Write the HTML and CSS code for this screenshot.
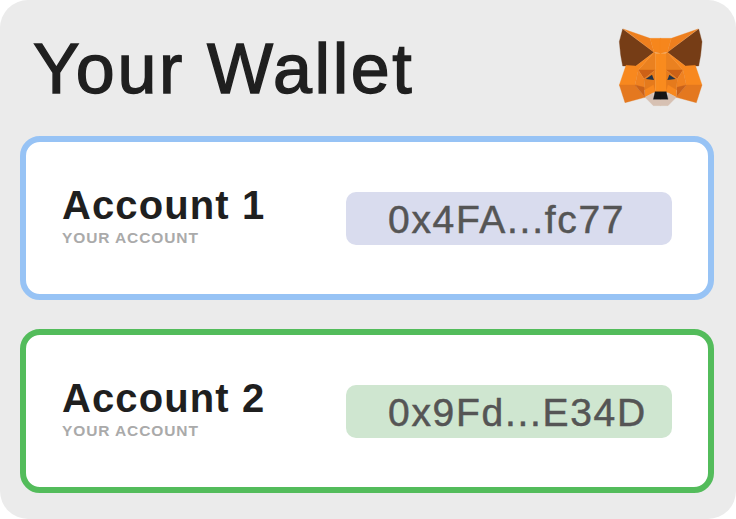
FILE: index.html
```html
<!DOCTYPE html>
<html lang="en">
<head>
    <meta charset="UTF-8">
    <meta name="viewport" content="width=device-width, initial-scale=1.0">
    <title>Your Wallet</title>
    <link rel="stylesheet" href="styles.css">
</head>
<body>
    <div class="wallet">
        <div class="wallet-header">
            <h1>Your Wallet</h1>
            <svg class="fox" viewBox="0 0 360 330" aria-hidden="true">
                <g id="half">
                    <polygon fill="#763d16" stroke="#763d16" points="68,57 162,127 108,168 68,168 62,135 58,95"/>
                    <polygon fill="#ee7f1e" stroke="#ee7f1e" points="70,57 150,85 162,127"/>
                    <polygon fill="#f6861c" stroke="#f6861c" points="150,85 183,85 183,130 162,127"/>
                    <polygon fill="#ea8120" stroke="#ea8120" points="162,127 166,130 166,180 115,180"/>
                    <polygon fill="#f8881e" stroke="#f8881e" points="78,166 108,168 162,127 115,180 105,225 58,225"/>
                    <polygon fill="#cd6116" stroke="#cd6116" points="115,180 166,180 132,207"/>
                    <polygon fill="#f08220" stroke="#f08220" points="115,180 132,207 135,240 105,225"/>
                    <polygon fill="#e4781f" stroke="#e4781f" points="58,225 105,225 135,262 75,278"/>
                    <polygon fill="#c9621a" stroke="#c9621a" points="105,225 133,232 135,262"/>
                    <polygon fill="#e57a1c" stroke="#e57a1c" points="132,207 166,180 166,245 135,240"/>
                    <polygon fill="#f8881e" stroke="#f8881e" points="135,240 160,225 166,245 135,262"/>
                    <polygon fill="#f98b1e" stroke="#f98b1e" points="166,130 183,130 183,246 166,246"/>
                    <polygon fill="#233447" points="137,207 156,194 162,210"/>
                    <polygon fill="#d7c1b3" stroke="#d7c1b3" points="135,262 160,248 160,268 183,268 183,287 160,287"/>
                    <polygon fill="#161616" stroke="#161616" points="165,245 183,245 183,268 160,268"/>
                </g>
                <use href="#half" transform="translate(364) scale(-1,1)"/>
            </svg>
        </div>
        <div class="account account-blue">
            <div class="account-info">
                <div class="account-name">Account 1</div>
                <div class="account-label">YOUR ACCOUNT</div>
            </div>
            <div class="address">0x4FA...fc77</div>
        </div>
        <div class="account account-green">
            <div class="account-info">
                <div class="account-name">Account 2</div>
                <div class="account-label">YOUR ACCOUNT</div>
            </div>
            <div class="address">0x9Fd...E34D</div>
        </div>
    </div>
</body>
</html>
```

FILE: styles.css
```css
html, body {
    margin: 0;
    padding: 0;
    background-color: #fff;
}

body {
    font-family: 'Liberation Sans', Arial, sans-serif;
    width: 736px;
    height: 519px;
    overflow: hidden;
}

.wallet {
    box-sizing: border-box;
    width: 736px;
    height: 519px;
    padding: 0 22px 26px 20px;
    background-color: #ebebeb;
    border-radius: 28px;
}

.wallet-header {
    height: 136px;
    display: flex;
    justify-content: space-between;
}

h1 {
    margin: 27px 0 0 13px;
    font-size: 70px;
    line-height: 84px;
    font-weight: normal;
    letter-spacing: 2.6px;
    -webkit-text-stroke: 1.4px #1f1f1f;
    color: #1f1f1f;
}

.fox {
    width: 120px;
    height: 110px;
    margin: 10px -6px 0 0;
}

.account {
    box-sizing: border-box;
    height: 164px;
    display: flex;
    align-items: center;
    justify-content: space-between;
    padding: 0 36px 0 36px;
    background: #fff;
    border: 6px solid;
    border-radius: 20px;
}

.account-blue {
    border-color: #97c3f5;
}

.account-green {
    margin-top: 29px;
    border-color: #53bc5b;
}

.account-info {
    padding-bottom: 7px;
}

.account-name {
    font-size: 40px;
    line-height: 44px;
    font-weight: bold;
    letter-spacing: 1.1px;
    color: #1f1f1f;
}

.account-label {
    margin-top: 2px;
    font-size: 15.5px;
    line-height: 18px;
    font-weight: bold;
    letter-spacing: 0.9px;
    color: #aaa;
}

.address {
    box-sizing: border-box;
    width: 326px;
    height: 53px;
    padding: 1px 0 0 42px;
    border-radius: 10px;
    font-size: 39px;
    line-height: 53px;
    letter-spacing: 1.7px;
    -webkit-text-stroke: 0.5px #555;
    color: #555;
}

.account-blue .address {
    background-color: #d9dcee;
}

.account-green .address {
    background-color: #cfe6d0;
}
```
